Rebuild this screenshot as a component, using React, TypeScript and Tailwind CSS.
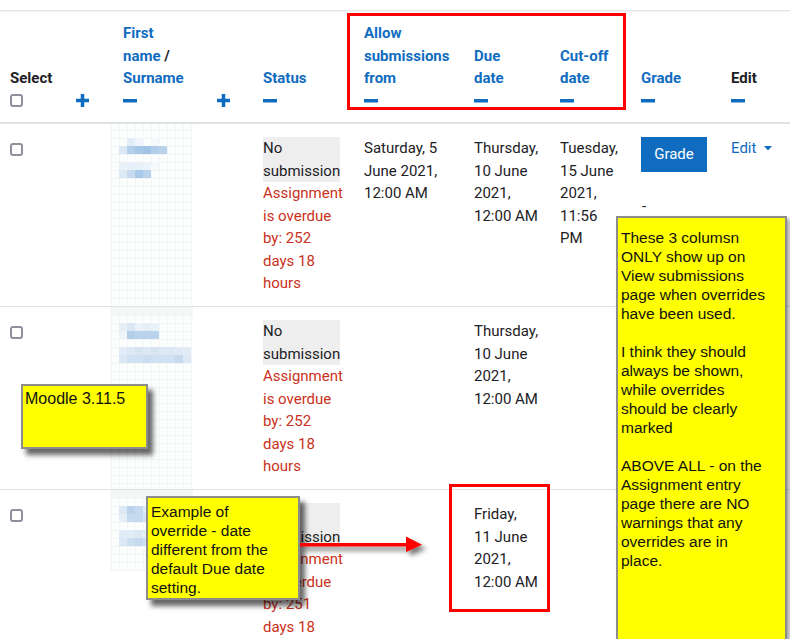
import React from "react";

const COLS = [
  "w-[64px] pl-[10px]",
  "w-[46px] pl-[12px]",
  "w-[95px] pl-[13px]",
  "w-[46px] pl-[12px]",
  "w-[101px] pl-[12px]",
  "w-[110px] pl-[12px]",
  "w-[86px] pl-[12px]",
  "w-[81px] pl-[12px]",
  "w-[90px] pl-[12px]",
  "w-[71px] pl-[12px]",
];

function Plus() {
  return (
    <svg width="13" height="13" viewBox="0 0 13 13" className="block">
      <rect x="0" y="4.75" width="13" height="3.5" fill="#0f6cbf" />
      <rect x="4.75" y="0" width="3.5" height="13" fill="#0f6cbf" />
    </svg>
  );
}

function Minus() {
  return (
    <svg width="14" height="4" viewBox="0 0 14 4" className="block">
      <rect x="0" y="0" width="14" height="3.5" fill="#0f6cbf" />
    </svg>
  );
}

function Checkbox() {
  return <div className="w-[13px] h-[13px] border-2 border-[#8e8f9c] rounded-[3px] bg-white" />;
}

type Cell = [number, number, string];

function Mosaic({ h, band, offset, cells }: { h: number; band: boolean; offset: number; cells: Cell[] }) {
  const v: number[] = [];
  for (let k = 0; k <= 10; k++) v.push(1 + 8 * k);
  const hz: number[] = [];
  for (let y = offset; y < h; y += 8) hz.push(y);
  return (
    <svg width="83" height={h} className="block">
      <rect x="0" y="0" width="83" height={h} fill="#fcfdfd" />
      {band && <rect x="0" y="0" width="83" height="9" fill="#f5f7f7" />}
      {v.map((x) => (
        <line key={"v" + x} x1={x + 0.5} y1={0} x2={x + 0.5} y2={h} stroke="#f3f5f6" strokeWidth="1" />
      ))}
      {hz.map((y) => (
        <line key={"h" + y} x1={0} y1={y + 0.5} x2={83} y2={y + 0.5} stroke="#f3f5f6" strokeWidth="1" />
      ))}
      {cells.map(([x, y, c], i) => (
        <rect key={i} x={x} y={y} width="8" height="8" fill={c} />
      ))}
    </svg>
  );
}

const row1Cells: Cell[] = [
  [17, 14, "#e3edf7"], [25, 14, "#eff5fa"], [41, 14, "#f4f8fc"],
  [9, 22, "#dbe7f4"], [17, 22, "#b4cfea"], [25, 22, "#a8c8e7"], [33, 22, "#a2c4e6"], [41, 22, "#b2ceea"], [49, 22, "#b9d3ec"],
  [9, 38, "#e9f0f8"], [17, 38, "#e7eff8"], [25, 38, "#e9f1f8"], [33, 38, "#edf3fa"], [41, 38, "#f6f9fc"],
  [9, 46, "#dde9f5"], [17, 46, "#c5daef"], [25, 46, "#a9c9e8"], [33, 46, "#b9d3ec"],
];

const row2Light = ["#e2ecf6", "#dce8f4", "#d7e5f3", "#dce8f4", "#d7e5f3", "#dce8f4", "#dce8f4", "#dfeaf5", "#e2ecf6"];
const row2Dark = ["#dce8f4", "#d0e1f1", "#d0e1f1", "#cadef0", "#d0e1f1", "#d0e1f1", "#d0e1f1", "#c5daef", "#dce8f4"];
const row2Cells: Cell[] = [
  [9, 16, "#e6eef7"], [17, 16, "#dbe7f4"], [25, 16, "#eaf1f8"], [33, 16, "#e6eef7"], [41, 16, "#e9f0f8"],
  [9, 24, "#eef4fa"], [17, 24, "#b4cfea"], [25, 24, "#bad3ec"], [33, 24, "#bad3ec"], [41, 24, "#bad3ec"],
  ...row2Light.map((c, i) => [9 + 8 * i, 40, c] as Cell),
  ...row2Dark.map((c, i) => [9 + 8 * i, 48, c] as Cell),
];

const row3Cells: Cell[] = [
  [9, 16, "#dce8f4"], [17, 16, "#b9d3ec"], [25, 16, "#c5daef"], [33, 16, "#e2ecf6"],
  [9, 24, "#e6eef7"], [17, 24, "#c5daef"], [25, 24, "#c5daef"], [33, 24, "#d5e4f2"],
  [9, 40, "#e2ecf6"], [17, 40, "#e2ecf6"], [25, 40, "#dce8f4"], [33, 40, "#e6eef7"],
  [9, 48, "#dce8f4"], [17, 48, "#cadef0"], [25, 48, "#c5daef"], [33, 48, "#d0e1f1"],
];

function Lines({ lines, className = "" }: { lines: string[]; className?: string }) {
  return (
    <div className={className}>
      {lines.map((l, i) => (
        <div key={i} className="h-[22.5px] leading-[22.5px] whitespace-nowrap">
          {l}
        </div>
      ))}
    </div>
  );
}

function HeadLine({ children, blue = true }: { children: React.ReactNode; blue?: boolean }) {
  return (
    <div className={"h-[22.5px] leading-[22.5px] whitespace-nowrap font-bold " + (blue ? "text-[#0f6cbf]" : "text-[#1d2125]")}>
      {children}
    </div>
  );
}

function IconLine({ children }: { children: React.ReactNode }) {
  return <div className="h-[22.5px] flex items-center">{children}</div>;
}

function HCell({ i, children }: { i: number; children?: React.ReactNode }) {
  return <div className={"shrink-0 flex flex-col justify-end pb-[10px] " + COLS[i]}>{children}</div>;
}

function BCell({ i, children }: { i: number; children?: React.ReactNode }) {
  return <div className={"shrink-0 pt-[13px] pb-[11px] " + COLS[i]}>{children}</div>;
}

function NameCell({ children }: { children: React.ReactNode }) {
  return <div className="shrink-0 w-[95px] self-stretch">{children}</div>;
}

function Status({ overdue }: { overdue: string[] }) {
  return (
    <div>
      <div className="w-fit bg-[#eeeeee]">
        <div className="h-[22.5px] leading-[22.5px]">No</div>
        <div className="h-[22.5px] leading-[22.5px]">submission</div>
      </div>
      <Lines lines={overdue} className="text-[#ca3120]" />
    </div>
  );
}

function GradeCol() {
  return (
    <div>
      <div className="w-[66px] h-[35px] bg-[#0f6cbf] text-white flex items-center justify-center leading-[22.5px]">Grade</div>
      <div className="mt-[23px] h-[22.5px] leading-[22.5px] pl-[1px]">-</div>
    </div>
  );
}

function EditCol() {
  return (
    <div className="flex items-center h-[22.5px] text-[#0f6cbf] whitespace-nowrap">
      <span>Edit</span>
      <svg width="8" height="5" viewBox="0 0 8 5" className="ml-[8px]">
        <polygon points="0,0 8,0 4,4.5" fill="#0f6cbf" />
      </svg>
    </div>
  );
}

function CheckCell() {
  return (
    <div className="pt-[6px]">
      <Checkbox />
    </div>
  );
}

export default function App() {
  return (
    <div className="relative w-[790px] h-[639px] overflow-hidden bg-white font-['Roboto',sans-serif] text-[15px] leading-[22.5px] text-[#1d2125]">
      <div className="h-[10px]" />
      <div className="h-px bg-[#e4e6e9]" />
      <div className="h-px bg-[#f3f4f5]" />

      {/* header */}
      <div className="flex h-[112px] border-b-2 border-[#dee2e6]">
        <HCell i={0}>
          <HeadLine blue={false}>Select</HeadLine>
          <IconLine>
            <Checkbox />
          </IconLine>
        </HCell>
        <HCell i={1}>
          <IconLine>
            <Plus />
          </IconLine>
        </HCell>
        <HCell i={2}>
          <HeadLine>First</HeadLine>
          <HeadLine>
            name <span className="text-[#1d2125]">/</span>
          </HeadLine>
          <HeadLine>Surname</HeadLine>
          <IconLine>
            <Minus />
          </IconLine>
        </HCell>
        <HCell i={3}>
          <IconLine>
            <Plus />
          </IconLine>
        </HCell>
        <HCell i={4}>
          <HeadLine>Status</HeadLine>
          <IconLine>
            <Minus />
          </IconLine>
        </HCell>
        <HCell i={5}>
          <HeadLine>Allow</HeadLine>
          <HeadLine>submissions</HeadLine>
          <HeadLine>from</HeadLine>
          <IconLine>
            <Minus />
          </IconLine>
        </HCell>
        <HCell i={6}>
          <HeadLine>Due</HeadLine>
          <HeadLine>date</HeadLine>
          <IconLine>
            <Minus />
          </IconLine>
        </HCell>
        <HCell i={7}>
          <HeadLine>Cut-off</HeadLine>
          <HeadLine>date</HeadLine>
          <IconLine>
            <Minus />
          </IconLine>
        </HCell>
        <HCell i={8}>
          <HeadLine>Grade</HeadLine>
          <IconLine>
            <Minus />
          </IconLine>
        </HCell>
        <HCell i={9}>
          <HeadLine blue={false}>Edit</HeadLine>
          <IconLine>
            <Minus />
          </IconLine>
        </HCell>
      </div>

      {/* row 1 */}
      <div className="flex border-b border-[#dee2e6]">
        <BCell i={0}>
          <CheckCell />
        </BCell>
        <BCell i={1} />
        <NameCell>
          <Mosaic h={182} band={false} offset={6} cells={row1Cells} />
        </NameCell>
        <BCell i={3} />
        <BCell i={4}>
          <Status overdue={["Assignment", "is overdue", "by: 252", "days 18", "hours"]} />
        </BCell>
        <BCell i={5}>
          <Lines lines={["Saturday, 5", "June 2021,", "12:00 AM"]} />
        </BCell>
        <BCell i={6}>
          <Lines lines={["Thursday,", "10 June", "2021,", "12:00 AM"]} />
        </BCell>
        <BCell i={7}>
          <Lines lines={["Tuesday,", "15 June", "2021,", "11:56", "PM"]} />
        </BCell>
        <BCell i={8}>
          <GradeCol />
        </BCell>
        <BCell i={9}>
          <EditCol />
        </BCell>
      </div>

      {/* row 2 */}
      <div className="flex border-b border-[#dee2e6]">
        <BCell i={0}>
          <CheckCell />
        </BCell>
        <BCell i={1} />
        <NameCell>
          <Mosaic h={182} band={true} offset={8} cells={row2Cells} />
        </NameCell>
        <BCell i={3} />
        <BCell i={4}>
          <Status overdue={["Assignment", "is overdue", "by: 252", "days 18", "hours"]} />
        </BCell>
        <BCell i={5} />
        <BCell i={6}>
          <Lines lines={["Thursday,", "10 June", "2021,", "12:00 AM"]} />
        </BCell>
        <BCell i={7} />
        <BCell i={8} />
        <BCell i={9} />
      </div>

      {/* row 3 */}
      <div className="flex">
        <BCell i={0}>
          <CheckCell />
        </BCell>
        <BCell i={1} />
        <div className="shrink-0 w-[95px]">
          <Mosaic h={81} band={true} offset={8} cells={row3Cells} />
        </div>
        <BCell i={3} />
        <BCell i={4}>
          <Status overdue={["Assignment", "is overdue", "by: 251", "days 18", "hours"]} />
        </BCell>
        <BCell i={5} />
        <BCell i={6}>
          <Lines lines={["Friday,", "11 June", "2021,", "12:00 AM"]} />
        </BCell>
        <BCell i={7} />
        <BCell i={8} />
        <BCell i={9} />
      </div>

      {/* annotations */}
      <div className="absolute left-[347px] top-[13px] w-[279px] h-[97px] border-[3px] border-[#ff0000]" />
      <div className="absolute left-[449px] top-[484px] w-[101px] h-[128px] border-[3px] border-[#ff0000]" />

      <div className="absolute left-[21px] top-[384px] w-[127px] h-[65px] bg-[#ffff00] border-2 border-[#8c8c8c] shadow-[5px_6px_5px_rgba(0,0,0,0.6)] font-['Liberation_Sans',Arial,sans-serif] text-[16px] leading-[19px] text-[#111] pl-[2px] pt-[3px]">
        Moodle 3.11.5
      </div>

      <div className="absolute left-[146px] top-[496px] w-[154px] h-[104px] bg-[#ffff00] border-2 border-[#8c8c8c] shadow-[5px_6px_5px_rgba(0,0,0,0.6)] font-['Liberation_Sans',Arial,sans-serif] text-[15.5px] leading-[19px] text-[#111] pl-[3px] pt-[4px]">
        <div>Example of</div>
        <div>override - date</div>
        <div>different from the</div>
        <div>default Due date</div>
        <div>setting.</div>
      </div>

      <svg className="absolute left-[296px] top-[530px]" width="140" height="36" viewBox="0 0 140 36">
        <defs>
          <filter id="sh" x="-10%" y="-50%" width="130%" height="220%">
            <feDropShadow dx="4" dy="4" stdDeviation="2.5" floodColor="#000" floodOpacity="0.55" />
          </filter>
        </defs>
        <g filter="url(#sh)">
          <rect x="4" y="13" width="109" height="3.5" fill="#ff0000" />
          <polygon points="110,6.5 126,14.75 110,22" fill="#ff0000" />
        </g>
      </svg>

      <div className="absolute left-[616px] top-[216px] w-[171px] h-[440px] bg-[#ffff00] border-2 border-[#8c8c8c] shadow-[3px_3px_4px_rgba(0,0,0,0.35)] font-['Liberation_Sans',Arial,sans-serif] text-[15.5px] leading-[19px] text-[#111] pl-[3px] pt-[10px]">
        <div>These 3 columsn</div>
        <div>ONLY show up on</div>
        <div>View submissions</div>
        <div>page when overrides</div>
        <div>have been used.</div>
        <div className="h-[19px]" />
        <div>I think they should</div>
        <div>always be shown,</div>
        <div>while overrides</div>
        <div>should be clearly</div>
        <div>marked</div>
        <div className="h-[19px]" />
        <div>ABOVE ALL - on the</div>
        <div>Assignment entry</div>
        <div>page there are NO</div>
        <div>warnings that any</div>
        <div>overrides are in</div>
        <div>place.</div>
      </div>
    </div>
  );
}
